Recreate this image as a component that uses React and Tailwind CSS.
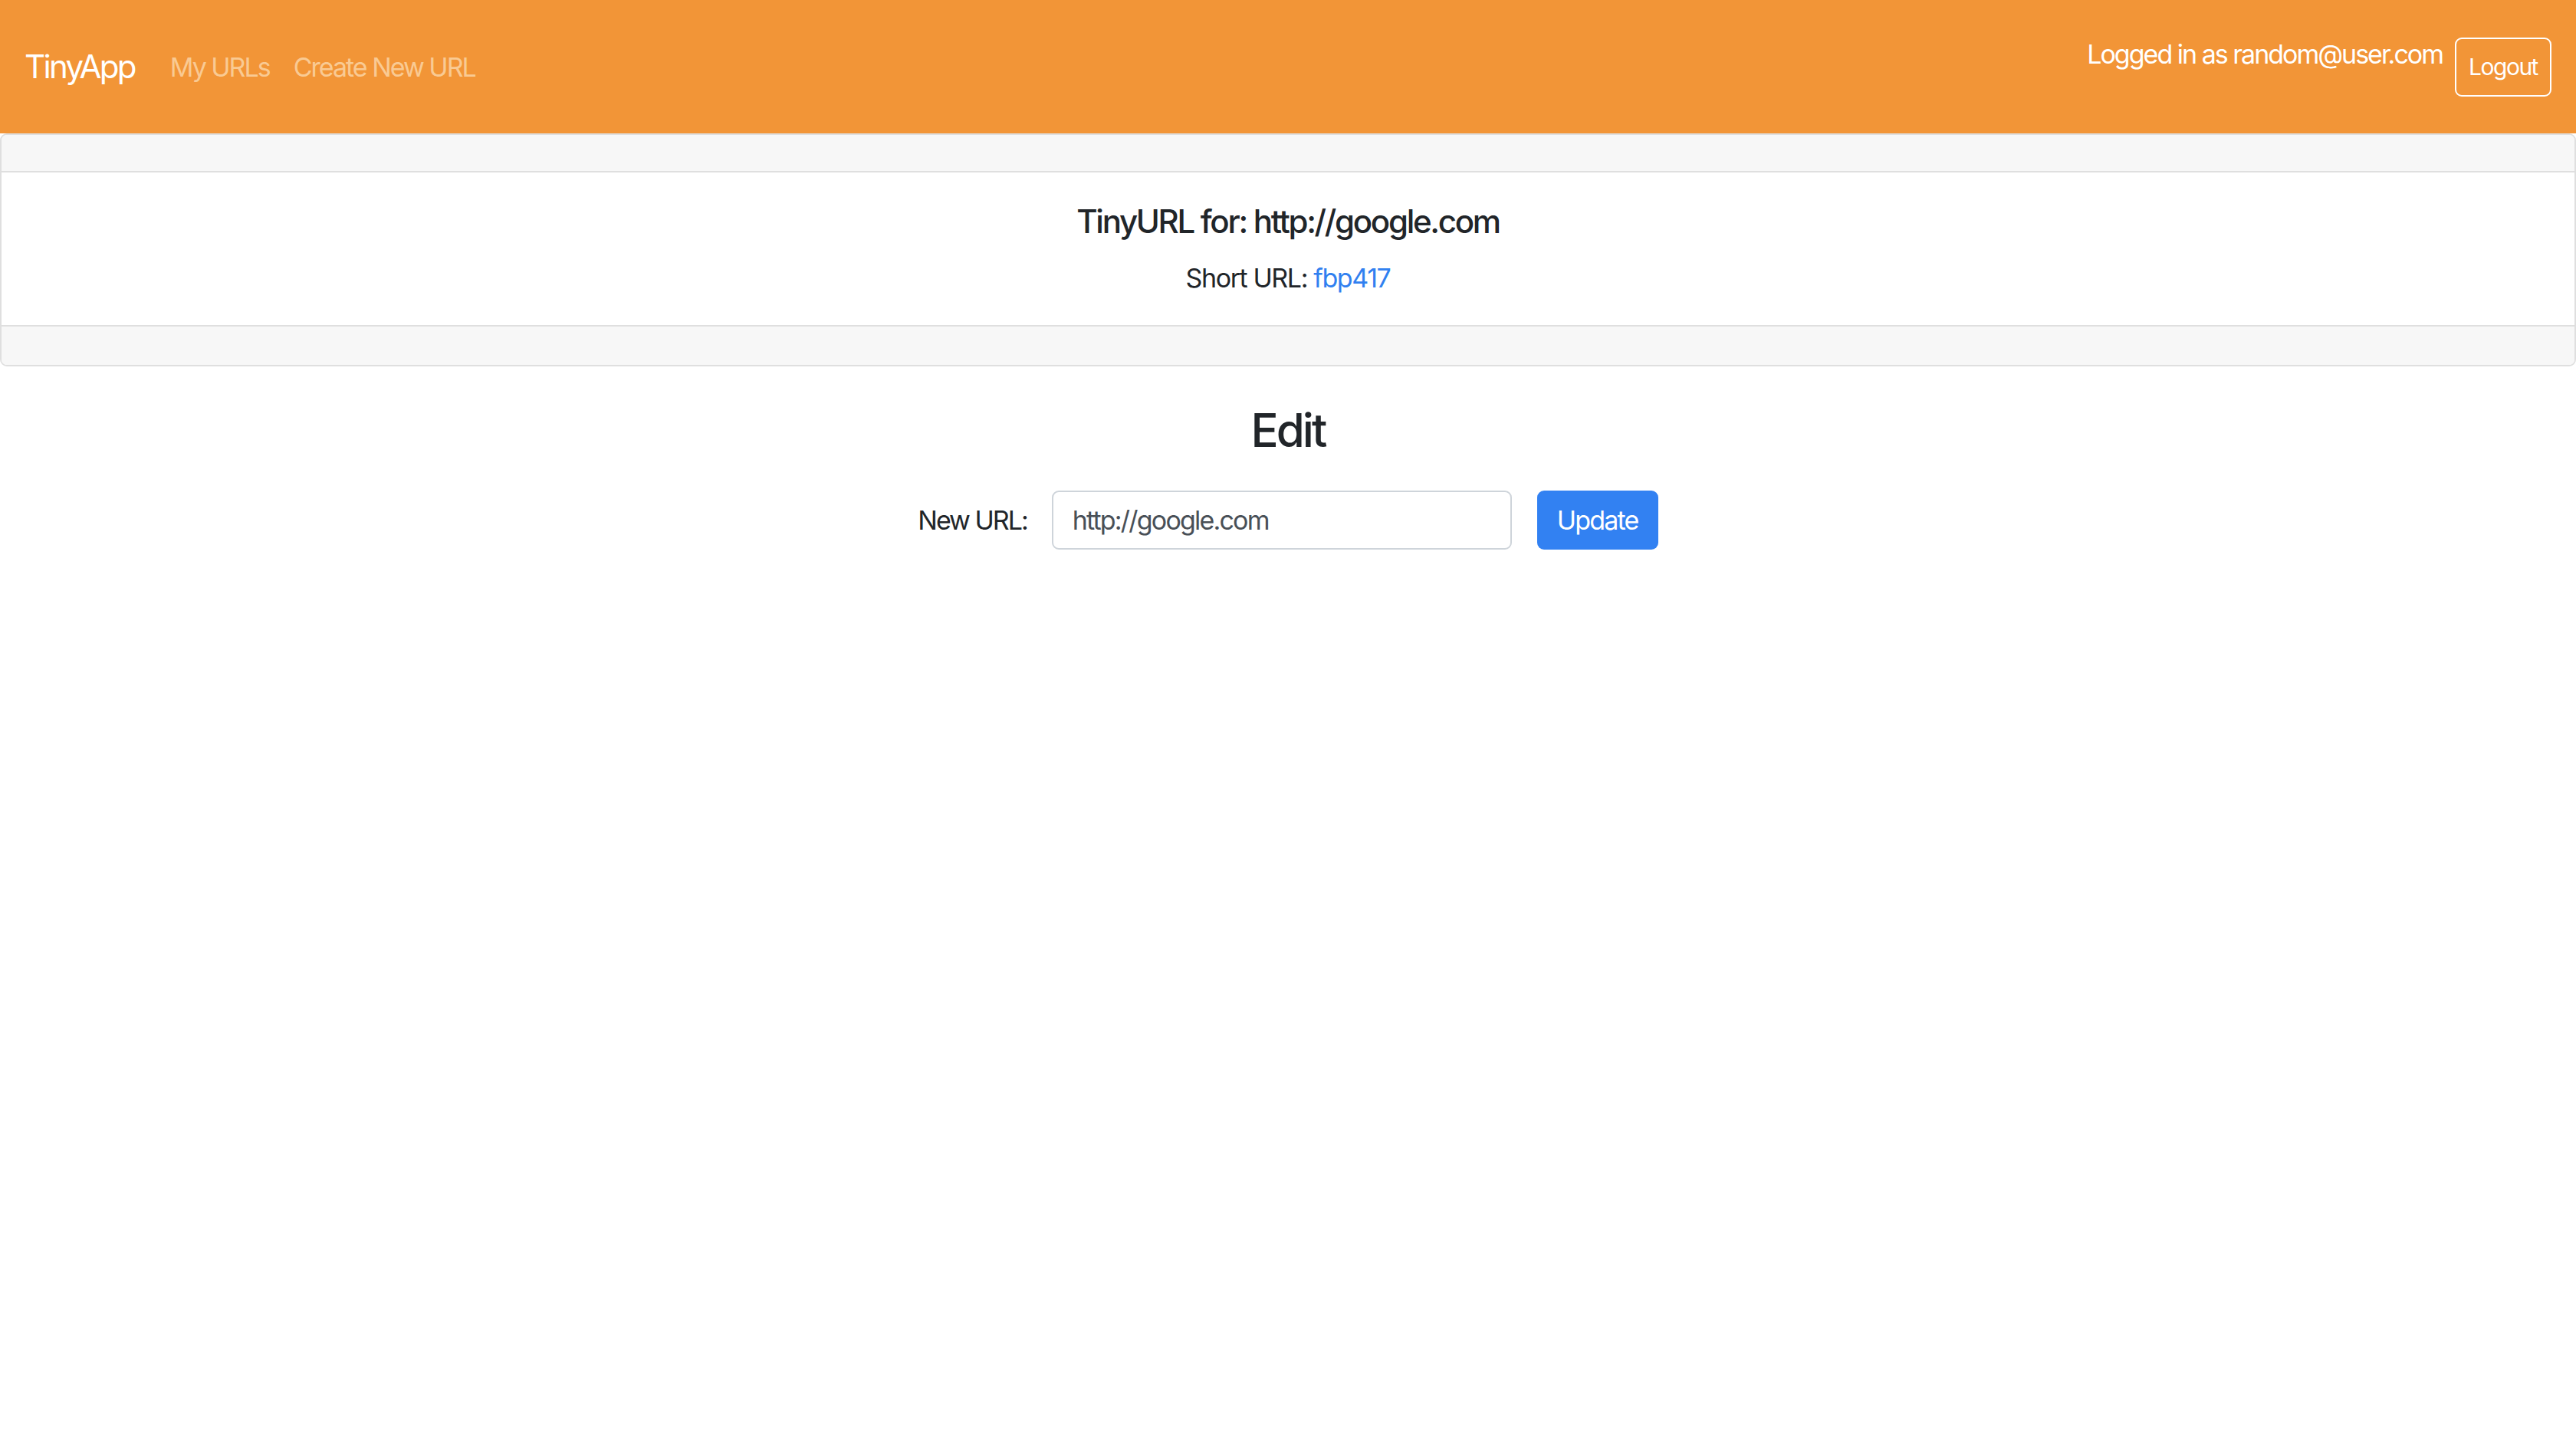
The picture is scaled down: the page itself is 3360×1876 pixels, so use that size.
import React, { useState } from "react";

// Edit page for a short URL
const App = () => {
  const [longUrl, setLongUrl] = useState("http://google.com");

  return (
    <div
      className="min-h-screen bg-white text-[#212529]"
      style={{ fontFamily: "Inter, 'Noto Sans', 'Liberation Sans', sans-serif" }}
    >
      <header className="bg-[#f29537] h-[174px] flex items-center justify-between pl-[32px] pr-[32px]">
        <div className="flex items-center">
          <a href="#" className="text-white text-[42px] leading-none mr-[30px] tracking-[-2.7px]">
            TinyApp
          </a>
          <nav className="flex items-center">
            <a href="#" className="text-[#f9ca93] text-[34px] pl-[16px] pr-[15px] tracking-[-2px]">
              My URLs
            </a>
            <a href="#" className="text-[#f9ca93] text-[34px] px-[16px] tracking-[-2px]">
              Create New URL
            </a>
          </nav>
        </div>
        <div className="flex items-start">
          <span className="text-white text-[34px] leading-[51px] mt-[-4px] mr-[16px] tracking-[-2px]">
            Logged in as random@user.com
          </span>
          <button className="w-[126px] h-[77px] border-2 border-white rounded-[9px] text-white text-[30px] tracking-[-1.5px] flex items-center justify-center">
            Logout
          </button>
        </div>
      </header>

      <section className="border-2 border-[#dfdfdf] rounded-[9px] overflow-hidden">
        <div className="h-[49px] bg-[#f7f7f7] border-b-2 border-[#dfdfdf]"></div>
        <div className="pt-[38px] pb-[36px] text-center">
          <h5 className="text-[42px] leading-[51px] font-medium tracking-[-2.3px]">
            TinyURL for: http://google.com
          </h5>
          <p className="mt-[23px] text-[34px] leading-[51px] tracking-[-1.4px]">
            Short URL:{" "}
            <a href="#" className="text-[#3080f0]">
              fbp417
            </a>
          </p>
        </div>
        <div className="h-[52px] bg-[#f7f7f7] border-t-2 border-[#dfdfdf]"></div>
      </section>

      <main className="flex flex-col items-center">
        <h3 className="mt-[47px] text-[60px] leading-[72px] font-medium tracking-[-2.9px]">Edit</h3>
        <form
          className="mt-[43px] flex items-center"
          onSubmit={(e) => e.preventDefault()}
        >
          <label className="text-[34px] tracking-[-2px] mr-[32px]">New URL:</label>
          <input
            type="text"
            value={longUrl}
            onChange={(e) => setLongUrl(e.target.value)}
            className="w-[600px] h-[77px] border-2 border-[#ced4da] rounded-[9px] px-[25px] text-[34px] text-[#495057] tracking-[-1.8px] outline-none"
          />
          <button
            type="submit"
            className="ml-[33px] w-[158px] h-[77px] bg-[#3281f2] rounded-[9px] text-white text-[34px] tracking-[-1.8px]"
          >
            Update
          </button>
        </form>
      </main>
    </div>
  );
};

export default App;
